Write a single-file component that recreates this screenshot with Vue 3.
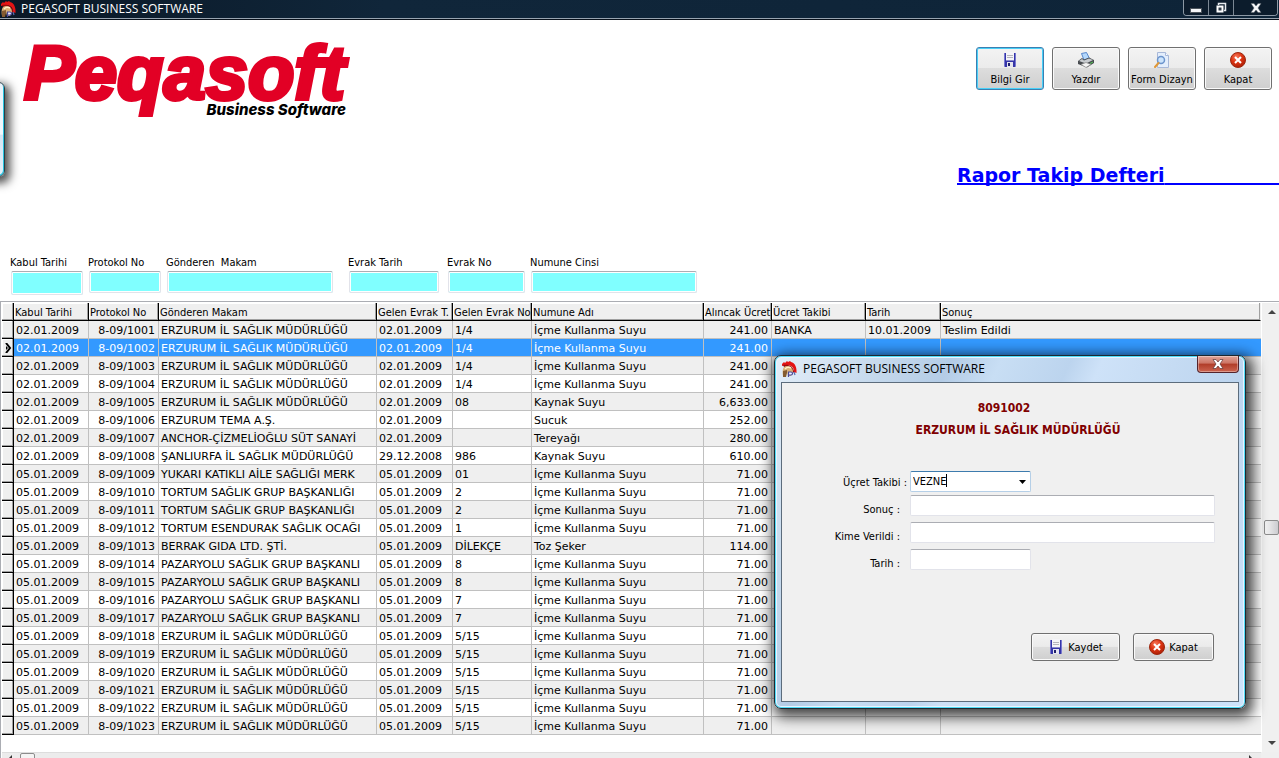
<script setup>
import { ref } from 'vue'

const filters = ref([
  { id: 'kabul', label: 'Kabul Tarihi', value: '', tall: true },
  { id: 'protokol', label: 'Protokol No', value: '' },
  { id: 'makam', label: 'Gönderen  Makam', value: '' },
  { id: 'evraktarih', label: 'Evrak Tarih', value: '' },
  { id: 'evrakno', label: 'Evrak No', value: '' },
  { id: 'numune', label: 'Numune Cinsi', value: '' },
])

const il = 'ERZURUM İL SAĞLIK MÜDÜRLÜĞÜ'
const su = 'İçme Kullanma Suyu'
const d2 = '02.01.2009'
const d5 = '05.01.2009'

const rows = [
  [d2, '8-09/1001', il, d2, '1/4', su, '241.00', 'BANKA', '10.01.2009', 'Teslim Edildi'],
  [d2, '8-09/1002', il, d2, '1/4', su, '241.00'],
  [d2, '8-09/1003', il, d2, '1/4', su, '241.00'],
  [d2, '8-09/1004', il, d2, '1/4', su, '241.00'],
  [d2, '8-09/1005', il, d2, '08', 'Kaynak Suyu', '6,633.00'],
  [d2, '8-09/1006', 'ERZURUM TEMA A.Ş.', d2, '', 'Sucuk', '252.00'],
  [d2, '8-09/1007', 'ANCHOR-ÇİZMELİOĞLU SÜT SANAYİ', d2, '', 'Tereyağı', '280.00'],
  [d2, '8-09/1008', 'ŞANLIURFA İL SAĞLIK MÜDÜRLÜĞÜ', '29.12.2008', '986', 'Kaynak Suyu', '610.00'],
  [d5, '8-09/1009', 'YUKARI KATIKLI AİLE SAĞLIĞI MERK', d5, '01', su, '71.00'],
  [d5, '8-09/1010', 'TORTUM SAĞLIK GRUP BAŞKANLIĞI', d5, '2', su, '71.00'],
  [d5, '8-09/1011', 'TORTUM SAĞLIK GRUP BAŞKANLIĞI', d5, '2', su, '71.00'],
  [d5, '8-09/1012', 'TORTUM ESENDURAK SAĞLIK OCAĞI', d5, '1', su, '71.00'],
  [d5, '8-09/1013', 'BERRAK GIDA LTD. ŞTİ.', d5, 'DİLEKÇE', 'Toz Şeker', '114.00'],
  [d5, '8-09/1014', 'PAZARYOLU SAĞLIK GRUP BAŞKANLI', d5, '8', su, '71.00'],
  [d5, '8-09/1015', 'PAZARYOLU SAĞLIK GRUP BAŞKANLI', d5, '8', su, '71.00'],
  [d5, '8-09/1016', 'PAZARYOLU SAĞLIK GRUP BAŞKANLI', d5, '7', su, '71.00'],
  [d5, '8-09/1017', 'PAZARYOLU SAĞLIK GRUP BAŞKANLI', d5, '7', su, '71.00'],
  [d5, '8-09/1018', il, d5, '5/15', su, '71.00'],
  [d5, '8-09/1019', il, d5, '5/15', su, '71.00'],
  [d5, '8-09/1020', il, d5, '5/15', su, '71.00'],
  [d5, '8-09/1021', il, d5, '5/15', su, '71.00'],
  [d5, '8-09/1022', il, d5, '5/15', su, '71.00'],
  [d5, '8-09/1023', il, d5, '5/15', su, '71.00'],
]

const heads = ['Kabul Tarihi', 'Protokol No', 'Gönderen Makam', 'Gelen Evrak T.', 'Gelen Evrak No', 'Numune Adı', 'Alıncak Ücret', 'Ücret Takibi', 'Tarih', 'Sonuç']
const selected = ref(1)
const takip = ref('VEZNE')
const sonuc = ref('')
const kime = ref('')
const tarih = ref('')
</script>

<template>
  <div class="app">
    <svg class="defs" aria-hidden="true">
      <defs>
        <radialGradient id="redball" cx="40%" cy="30%" r="75%">
          <stop offset="0" stop-color="#f8785a" />
          <stop offset="0.5" stop-color="#dc3412" />
          <stop offset="1" stop-color="#a81c04" />
        </radialGradient>
        <symbol id="floppy" viewBox="0 0 16 16">
          <path d="M2 1h12v13l-1 1H3l-1-1z" fill="#3434a8" />
          <path d="M2 1h1v13H2zM13 1h1v13h-1z" fill="#7878d0" />
          <path d="M4 0h8v8H4z" fill="#f4f4f8" />
          <path d="M5 3.500h6M5 5.500h6" stroke="#b4b4bc" />
          <path d="M4 8h8v1H4z" fill="#8888cc" />
          <path d="M5 10h6v5H5z" fill="#e4e4ee" />
          <path d="M6 11h2v3H6z" fill="#20206c" />
        </symbol>
        <symbol id="printer" viewBox="0 0 16 16">
          <path d="M3.500 1.500l5-1 3 6-5.500 1.500z" fill="#b4d8fc" stroke="#5888cc" />
          <path d="M0 9l4-3 2 1.500 5-2L16 8v3l-7 4.500L0 12z" fill="#484c50" />
          <path d="M1 9l3-2 2 1.500 5-2 4 1.500-7 3.500z" fill="#c8ccd0" />
          <path d="M3 12.500l5-2 5 2-5 3z" fill="#f4f4f4" stroke="#888" stroke-width=".7" />
          <path d="M12 11.500l3-1.500" stroke="#58cc58" />
        </symbol>
        <symbol id="preview" viewBox="0 0 16 16">
          <path d="M3.500 .5h8l3 3v12h-11z" fill="#e4eefc" stroke="#a8b8d8" />
          <path d="M11.500 .5v3h3" fill="#fff" stroke="#a8b8d8" />
          <circle cx="7" cy="8" r="3.500" fill="#cce4fc" stroke="#6c94cc" stroke-width="1.500" />
          <path d="M4.500 11L1 15" stroke="#e09838" stroke-width="2" stroke-linecap="round" />
        </symbol>
        <symbol id="cancel" viewBox="0 0 16 16">
          <circle cx="8" cy="8" r="7.500" fill="url(#redball)" stroke="#9c2810" />
          <path d="M5 5l6 6M11 5l-6 6" stroke="#fff" stroke-width="2" />
        </symbol>
        <symbol id="helmet" viewBox="0 0 16 16">
          <path d="M1 3l2-2 1 1 2-2 1 1 2-1 1 1c4 1 6 5 5.500 11L13 11C13 6 10 4 6 4L1 5z" fill="#e41414" />
          <path d="M2 4c5-1 10 0 11.500 8l-2-1C11 6 8 5 3 6z" fill="#980c0c" />
          <path d="M2 15C1 9 2 5 6 5c4 0 6 3 6 6l-2 4H7l-1-4-2 4z" fill="#d8b078" />
          <path d="M4 8c2-2 4-2 6-1" stroke="#fff0c8" stroke-width="1.500" fill="none" />
          <path d="M2 10l4-1v3l-1 4H2z" fill="#845c30" />
          <path d="M7.500 16v-5H10c2 0 2 3 0 3H8" fill="#f0f0ff" stroke="#484898" stroke-width="1.200" />
          <path d="M13 11l1 3" stroke="#586cb0" stroke-width="1.200" />
        </symbol>
      </defs>
    </svg>

    <header class="titlebar">
      <svg class="icon16"><use href="#helmet" /></svg>
      <span class="caption">PEGASOFT BUSINESS SOFTWARE</span>
      <div class="winbtns">
        <button type="button" aria-label="Küçült"><svg width="12" height="10" viewBox="0 0 12 10"><rect x=".5" y="5.500" width="11" height="4" fill="#f4f6f8" stroke="#4c545c" /></svg></button>
        <button type="button" aria-label="Önceki boyut"><svg width="12" height="12" viewBox="0 0 12 12"><path d="M3.500 3V1.500h7v7H9" fill="none" stroke="#e8ecf0" stroke-width="1.500" /><path d="M2.500 4.500h5v5h-5z" fill="#303c48" stroke="#fff" stroke-width="2" /></svg></button>
        <button type="button" class="wide" aria-label="Pencereyi kapat"><svg width="12" height="10" viewBox="0 0 12 10"><path d="M1 .5h3l2 2.500 2-2.500h3L8 5l3 4.500H8L6 7 4 9.500H1L4 5z" fill="#f6f6f8" stroke="#59626b" stroke-width=".5" /></svg></button>
      </div>
    </header>

    <section class="banner">
      <div class="logo">
        <div class="brand">Peqasoft</div>
        <div class="tag">Business Software</div>
      </div>
      <div class="right">
        <nav class="tools">
          <button type="button" class="tool active"><svg class="icon16"><use href="#floppy" /></svg>Bilgi Gir</button>
          <button type="button" class="tool"><svg class="icon16"><use href="#printer" /></svg>Yazdır</button>
          <button type="button" class="tool"><svg class="icon16"><use href="#preview" /></svg>Form Dizayn</button>
          <button type="button" class="tool"><svg class="icon16"><use href="#cancel" /></svg>Kapat</button>
        </nav>
        <h1>Rapor Takip Defteri</h1>
      </div>
    </section>

    <form class="filters" @submit.prevent>
      <div v-for="f in filters" :key="f.id" class="filter">
        <label :for="f.id">{{ f.label }}</label>
        <input :id="f.id" v-model="f.value" type="text" :class="{ tall: f.tall }" />
      </div>
    </form>

    <main class="gridbox">
      <div class="gridview">
        <table>
          <colgroup>
            <col class="c0" /><col class="c1" /><col class="c2" /><col class="c3" /><col class="c4" /><col class="c5" />
            <col class="c6" /><col class="c7" /><col class="c8" /><col class="c9" /><col />
          </colgroup>
          <thead>
            <tr>
              <th class="ind"></th>
              <th v-for="h in heads" :key="h">{{ h }}</th>
            </tr>
          </thead>
          <tbody>
            <tr v-for="(r, i) in rows" :key="i" :class="{ sel: i === selected }" @click="selected = i">
              <td class="ind"><svg v-if="i === selected" width="9" height="10" viewBox="0 0 9 10"><path d="M3 0l4 5-4 5" fill="none" stroke="#000" stroke-width="2" /><path d="M3 3v4l2-2z" /></svg></td>
              <td v-for="n in 10" :key="n" :class="{ num: n === 2 || n === 7 }">{{ r[n - 1] }}</td>
            </tr>
          </tbody>
        </table>
      </div>
      <div class="vscroll">
        <svg width="8" height="4" viewBox="0 0 8 4"><path d="M0 4l4-4 4 4z" fill="#444" /></svg>
        <span class="thumb"></span>
        <svg width="8" height="4" viewBox="0 0 8 4"><path d="M0 0l4 4 4-4z" fill="#444" /></svg>
      </div>
      <div class="hscroll">
        <svg width="4" height="8" viewBox="0 0 4 8"><path d="M4 0v8L0 4z" fill="#333" /></svg>
        <span class="hthumb"></span>
        <svg class="end" width="4" height="8" viewBox="0 0 4 8"><path d="M0 0v8l4-4z" fill="#333" /></svg>
      </div>
      <div class="corner"></div>
    </main>

    <div class="peek"></div>

    <div class="dialog" role="dialog" aria-labelledby="dlgtitle">
      <div class="dlghead">
        <svg class="icon16"><use href="#helmet" /></svg>
        <span id="dlgtitle" class="caption">PEGASOFT BUSINESS SOFTWARE</span>
        <button type="button" class="dlgclose" aria-label="Kapat"><svg width="12" height="10" viewBox="0 0 12 10"><path d="M1 .5h3l2 2.500 2-2.500h3L8 5l3 4.500H8L6 7 4 9.500H1L4 5z" fill="#fff" stroke="#5c3434" stroke-width=".7" /></svg></button>
      </div>
      <form class="dlgbody" @submit.prevent>
        <p class="no">8091002</p>
        <p class="no org">ERZURUM İL SAĞLIK MÜDÜRLÜĞÜ</p>
        <div class="fields">
          <label for="takip" class="wide">Üçret Takibi :</label>
          <div class="combo">
            <select id="takip" v-model="takip"><option>VEZNE</option><option>BANKA</option></select>
            <span class="caret"></span>
            <svg width="7" height="4" viewBox="0 0 7 4"><path d="M0 0h7L3.500 4z" /></svg>
          </div>
          <label for="sonuc">Sonuç :</label>
          <input id="sonuc" v-model="sonuc" type="text" />
          <label for="kime">Kime Verildi :</label>
          <input id="kime" v-model="kime" type="text" />
          <label for="tarih">Tarih :</label>
          <input id="tarih" v-model="tarih" type="text" class="short" />
        </div>
        <div class="actions">
          <button type="submit" class="act save"><svg class="icon16"><use href="#floppy" /></svg>Kaydet</button>
          <button type="button" class="act"><svg class="icon16"><use href="#cancel" /></svg>Kapat</button>
        </div>
      </form>
    </div>
  </div>
</template>

<style>
body { margin: 0; background: #fff; overflow: hidden; }
</style>

<style scoped>
* { box-sizing: border-box; }
.app {
  position: relative;
  display: flex;
  flex-direction: column;
  height: 100vh;
  overflow: hidden;
  font-family: "DejaVu Sans Condensed", "DejaVu Sans", sans-serif;
  font-size: 11px;
  color: #000;
}
button, input, select { font: inherit; color: inherit; margin: 0; padding: 0; }
.defs { position: absolute; width: 0; height: 0; }
.icon16 { width: 16px; height: 16px; flex: none; }
.caption { font-family: "Open Sans", "Noto Sans", sans-serif; font-size: 12px; line-height: 16px; white-space: nowrap; }

.titlebar {
  flex: none;
  display: flex;
  align-items: center;
  gap: 5px;
  height: 20px;
  padding-bottom: 1px;
  background: linear-gradient(90deg, #0a1826, #10263a 30%, #0e2438);
  border-bottom: 1px solid #08101a;
  box-shadow: inset 0 -1px 0 #98a4b0;
  color: #fff;
}
.winbtns {
  display: flex;
  align-self: flex-start;
  height: 16px;
  margin-left: auto;
  margin-right: 1px;
  border: 1px solid #8c98a4;
  border-top: 0;
  border-radius: 0 0 4px 4px;
  overflow: hidden;
}
.winbtns button {
  display: flex;
  align-items: center;
  justify-content: center;
  width: 25px;
  border: 0;
  border-right: 1px solid #7c8894;
  background: #0c1c2c;
}
.winbtns .wide { width: 43px; border-right: 0; }

.banner { flex: none; display: flex; height: 236px; }
.logo { width: 326px; margin-left: 24px; padding-top: 14px; font-style: italic; }
.brand {
  font-family: "Liberation Sans", Arial, sans-serif;
  font-weight: bold;
  font-size: 76px;
  line-height: 78px;
  color: #e20025;
  -webkit-text-stroke: 4px #e20025;
  white-space: nowrap;
}
.tag {
  margin-top: -10px;
  padding-right: 4px;
  font-family: Inter, "Liberation Sans", sans-serif;
  font-weight: 800;
  font-size: 15px;
  line-height: 16px;
  text-align: right;
  white-space: nowrap;
}
.right { display: flex; flex-direction: column; align-items: flex-end; margin-left: auto; padding-top: 27px; }
.tools { display: flex; gap: 8px; padding-right: 7px; }
.tool {
  display: flex;
  flex-direction: column;
  align-items: center;
  gap: 5px;
  width: 68px;
  height: 43px;
  padding-top: 4px;
  line-height: 14px;
  white-space: nowrap;
  border: 1px solid #707070;
  border-radius: 3px;
  background: linear-gradient(#f3f3f3, #ebebeb 48%, #dddddd 49%, #cfcfcf);
  box-shadow: inset 0 0 0 1px #fafafa;
}
.tool.active { border-color: #3c7fb1; box-shadow: inset 0 0 0 1px #48d0f8; }
h1 {
  width: 322px;
  margin: 73px 0 0;
  overflow: hidden;
  white-space: nowrap;
  font-family: "DejaVu Sans", sans-serif;
  font-size: 19px;
  line-height: 24px;
  color: #0000ff;
  text-decoration: underline 2px;
  text-decoration-skip-ink: none;
}
h1::after { content: "\a0\a0\a0\a0\a0\a0\a0\a0\a0\a0\a0\a0\a0\a0\a0\a0\a0\a0\a0\a0\a0\a0\a0\a0"; }

.filters {
  flex: none;
  display: grid;
  grid-template-columns: 78px 78px 182px 99px 83px 166px;
  align-items: start;
  height: 45px;
  padding-left: 11px;
}
.filter { display: flex; flex-direction: column; }
.filter label { line-height: 14px; margin: 0 0 1px -1px; white-space: pre; }
.filter input {
  width: 100%;
  height: 22px;
  border: 1px solid #e2e3ea;
  border-top-color: #abadb3;
  border-radius: 2px;
  background: #80ffff;
  box-shadow: inset 0 0 0 1px #fff;
}
.filter input.tall { height: 24px; }
.filter:nth-child(1), .filter:nth-child(2) { padding-right: 6px; }
.filter:nth-child(3) { padding-right: 16px; }
.filter:nth-child(4) { padding-right: 9px; }
.filter:nth-child(5) { padding-right: 6px; }

.gridbox {
  flex: 1;
  min-height: 0;
  display: grid;
  grid-template-columns: 1fr 18px;
  grid-template-rows: 1fr 6px;
  border: 1px solid #abadb3;
  border-width: 1px 0 0 1px;
  padding: 1px 0 0 1px;
}
.gridview { min-height: 0; overflow: hidden; }
table { width: 100%; table-layout: fixed; border-collapse: separate; border-spacing: 0; }
.c0 { width: 12px; }
.c1 { width: 75px; }
.c2 { width: 70px; }
.c3 { width: 218px; }
.c4 { width: 76px; }
.c5 { width: 79px; }
.c6 { width: 172px; }
.c7 { width: 68px; }
.c8 { width: 94px; }
.c9 { width: 75px; }
th, td { height: 18px; overflow: hidden; white-space: nowrap; text-align: left; }
th {
  font-weight: normal;
  line-height: 15px;
  background: #efefef;
  border-right: 1px solid #000;
  border-bottom: 1px solid #000;
  padding: 2px 0 0 1px;
  box-shadow: inset -1px -1px 0 #a0a0a0, inset 1px 1px 0 #fff;
}
th:last-child { border-right-color: #efefef; }
td {
  padding: 2px 2px 0;
  font-family: "DejaVu Sans", sans-serif;
  line-height: 15px;
  border-right: 1px solid #c0c0c0;
  border-bottom: 1px solid #c0c0c0;
}
td:last-child { border-right: 0; }
td.num { padding-right: 3px; text-align: right; }
tbody tr:nth-child(odd) { background: #efefef; }
tbody tr.sel { background: #3399ff; color: #fff; }
td.ind {
  padding: 0 0 0 1px;
  background: #efefef;
  border-right: 1px solid #000;
  border-bottom: 1px solid #000;
  box-shadow: inset -1px -1px 0 #a0a0a0, inset 1px 1px 0 #fff;
}
td.ind svg { display: block; }

.vscroll {
  display: grid;
  justify-items: center;
  grid-template-rows: 14px 200px 1fr auto;
  padding: 7px 1px 7px 2px;
  background: #f0f0f0;
  border-left: 1px solid #fff;
}
.thumb {
  grid-row: 3;
  width: 15px;
  height: 15px;
  margin-top: -4px;
  border: 1px solid #8c8c8c;
  border-radius: 2px;
  background: linear-gradient(90deg, #f4f4f4, #ccccd0);
}
.vscroll svg:last-child { grid-row: 4; }
.hscroll { display: flex; align-items: flex-start; padding: 2px 8px 0 6px; gap: 8px; background: #ececec; border-top: 1px solid #ddd; overflow: hidden; }
.hthumb { width: 15px; height: 14px; border: 1px solid #8c8c8c; border-radius: 2px; background: #f4f4f4; margin-top: -2px; }
.hscroll .end { margin-left: auto; }
.corner { background: #efefef; }

/* edge of the window lying behind, off the left side */
.peek {
  position: absolute;
  left: -30px;
  top: 82px;
  width: 35px;
  height: 95px;
  border: 1px solid #2c3c44;
  border-radius: 6px;
  background: linear-gradient(#eaf3fb, #f2f8fd 55%, #d4e4f2 56%, #e4f0fa);
  box-shadow: inset -1px -1px 0 #28c4e0, 3px 4px 10px 2px rgba(0, 0, 0, .7);
}

.dialog {
  position: absolute;
  left: 774px;
  top: 355px;
  width: 472px;
  padding: 0 6px 6px;
  border: 1px solid #1c2830;
  border-radius: 7px;
  background: linear-gradient(115deg, #e4eef8, #c4d8ec 18%, #b4cce6 28%, #c8def4 36%, #bcd4ee 47%, #cee2f8 52%, #bcd4ee 75%, #cee4fc);
  box-shadow: inset 0 0 0 1px #50dcf8, inset 0 0 0 2px #e8f4ff, 3px 4px 14px 4px rgba(0, 0, 0, .75);
}
.dlghead { display: flex; align-items: center; gap: 6px; height: 26px; }
.dlgclose {
  display: flex;
  align-items: center;
  justify-content: center;
  align-self: flex-start;
  width: 42px;
  height: 17px;
  margin-left: auto;
  border: 1px solid #54242c;
  border-top: 0;
  border-radius: 0 0 4px 4px;
  background: linear-gradient(#e0a498, #cc7464 45%, #b03c28 50%, #cc6450);
  box-shadow: inset 0 0 0 1px rgba(255, 255, 255, .35);
}
.dlgbody { height: 320px; padding-top: 17px; background: #f0f0f0; border: 1px solid #5c6c7c; }
.no { margin: 0 0 6px; padding-right: 12px; text-align: center; color: #800000; font-weight: bold; font-size: 12px; line-height: 16px; }
.no.org { padding: 0 0 0 16px; }
.fields {
  display: grid;
  grid-template-columns: 121px 1fr;
  column-gap: 7px;
  row-gap: 3px;
  margin-top: 33px;
  padding-right: 23px;
}
.fields label { padding: 7px 3px 0 0; text-align: right; line-height: 16px; white-space: nowrap; }
.fields label.wide { padding: 4px 0 0; margin-right: -4px; }
.fields input, .fields select {
  height: 21px;
  width: 100%;
  border: 1px solid #e2e3ea;
  border-top-color: #abadb3;
  border-radius: 2px;
  background: #fff;
}
.fields input { margin-bottom: 3px; }
.fields input.short, .combo { width: 121px; }
.combo { position: relative; }
.fields select { display: block; padding-left: 2px; appearance: none; outline: 0; border-color: #b5cfe7; border-top-color: #3d7bad; }
.combo .caret { position: absolute; left: 36px; top: 3px; width: 1px; height: 13px; background: #000; }
.combo svg { position: absolute; right: 5px; top: 9px; pointer-events: none; }
.actions { display: flex; justify-content: flex-end; gap: 13px; margin-top: 60px; padding-right: 24px; }
.act {
  display: flex;
  align-items: center;
  justify-content: center;
  gap: 4px;
  width: 81px;
  height: 28px;
  border: 1px solid #707070;
  border-radius: 3px;
  background: linear-gradient(#f3f3f3, #ebebeb 48%, #dddddd 49%, #cfcfcf);
  box-shadow: inset 0 0 0 1px #fafafa;
}
.act.save { width: 89px; }
</style>
